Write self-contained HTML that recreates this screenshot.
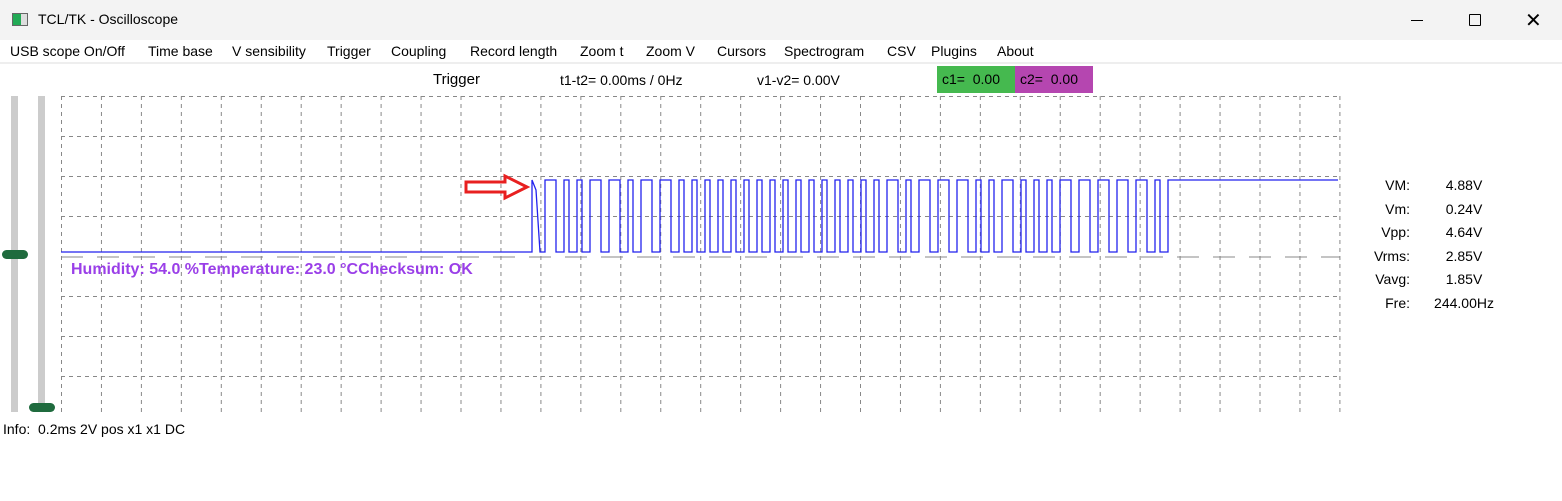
<!DOCTYPE html><html><head><style>
body{margin:0;width:1562px;height:501px;background:#fff;font-family:"Liberation Sans",sans-serif;overflow:hidden;position:relative}
.t{position:absolute;white-space:nowrap}
#title{position:absolute;left:0;top:0;width:1562px;height:40px;background:#f3f3f3}
#menu{position:absolute;left:0;top:40px;width:1562px;height:22px;background:#fff;border-bottom:2px solid #eee;font-size:14px}
#menu span{position:absolute;top:3px}
.m{font-size:14px;color:#000}
</style></head><body>
<div id="title">
<div style="position:absolute;left:12px;top:13px;width:14px;height:11px;border:1px solid #666;background:linear-gradient(90deg,#2a5 0 8px,#ddd 8px)"></div>
<div class="t" style="left:38px;top:11px;font-size:14px">TCL/TK - Oscilloscope</div>
<div style="position:absolute;left:1411px;top:20px;width:12px;height:1px;background:#000"></div>
<div style="position:absolute;left:1469px;top:14px;width:10px;height:10px;border:1px solid #000;border-radius:1px"></div>
<div class="t" style="left:1525px;top:8px;font-size:20px;font-weight:100">✕</div>
</div>
<div id="menu">
<span style="left:10px">USB scope On/Off</span><span style="left:148px">Time base</span><span style="left:232px">V sensibility</span><span style="left:327px">Trigger</span><span style="left:391px">Coupling</span><span style="left:470px">Record length</span><span style="left:580px">Zoom t</span><span style="left:646px">Zoom V</span><span style="left:717px">Cursors</span><span style="left:784px">Spectrogram</span><span style="left:887px">CSV</span><span style="left:931px">Plugins</span><span style="left:997px">About</span>
</div>
<div class="t m" style="left:433px;top:71px;font-size:15px">Trigger</div>
<div class="t m" style="left:560px;top:72px">t1-t2= 0.00ms / 0Hz</div>
<div class="t m" style="left:757px;top:72px">v1-v2= 0.00V</div>
<div class="t m" style="left:937px;top:66px;width:78px;height:27px;background:#45b94f;line-height:27px;padding-left:5px;box-sizing:border-box">c1=&nbsp; 0.00</div>
<div class="t m" style="left:1015px;top:66px;width:78px;height:27px;background:#b546b0;line-height:27px;padding-left:5px;box-sizing:border-box">c2=&nbsp; 0.00</div>
<div style="position:absolute;left:11px;top:96px;width:7px;height:316px;background:#ccc"></div>
<div style="position:absolute;left:38px;top:96px;width:7px;height:316px;background:#ccc"></div>
<div style="position:absolute;left:2px;top:250px;width:26px;height:9px;border-radius:5px;background:#1f6b3e"></div>
<div style="position:absolute;left:29px;top:403px;width:26px;height:9px;border-radius:5px;background:#1f6b3e"></div>
<svg id="sv" style="position:absolute;left:0;top:0" width="1562" height="501"></svg>
<div class="t" style="left:71px;top:261px;font-size:16px;font-weight:bold;color:#9a3fe8">Humidity: 54.0 %Temperature: 23.0 °CChecksum: OK</div>
<div class="t m" style="left:3px;top:421px">Info:&nbsp; 0.2ms 2V pos x1 x1 DC</div>
<div class="t m" style="left:1350px;top:174px;line-height:23.5px;width:60px;text-align:right">VM:<br>Vm:<br>Vpp:<br>Vrms:<br>Vavg:<br>Fre:</div>
<div class="t m" style="left:1420px;top:174px;line-height:23.5px;width:88px;text-align:center">4.88V<br>0.24V<br>4.64V<br>2.85V<br>1.85V<br>244.00Hz</div>
<script>
var s='';
for(var i=0;i<=32;i++){var x=61.5+i*39.95;s+='<line x1="'+x+'" y1="96" x2="'+x+'" y2="412" stroke="#888" stroke-dasharray="4,4"/>';}
for(var j=0;j<8;j++){var y=96.5+j*40;if(j==4)continue;s+='<line x1="61" y1="'+y+'" x2="1340" y2="'+y+'" stroke="#888" stroke-dasharray="4,4"/>';}
s+='<line x1="61" y1="257" x2="1340" y2="257" stroke="#888" stroke-dasharray="22,14"/>';
var bits='0011011000000000000000010111001000111110';
var d='M61 252 L532 252 L532 180 L536 190 L540 252 L545 252 L545 180 L556 180 L556 252 L564 252';var x=564;
for(var k=0;k<bits.length;k++){var h=bits[k]=='1'?11:5;d+=' L'+x+' 180 L'+(x+h)+' 180 L'+(x+h)+' 252';x+=h+8;d+=' L'+x+' 252';}
d+=' L'+x+' 180 L1338 180';
s+='<path d="'+d+'" fill="none" stroke="#2222ee" stroke-width="1.3"/>';
s+='<path d="M466 182 L505 182 L505 176 L527 187 L505 198 L505 192 L466 192 Z" fill="none" stroke="#e82020" stroke-width="3"/>';
document.getElementById('sv').innerHTML=s;
</script>
</body></html>
